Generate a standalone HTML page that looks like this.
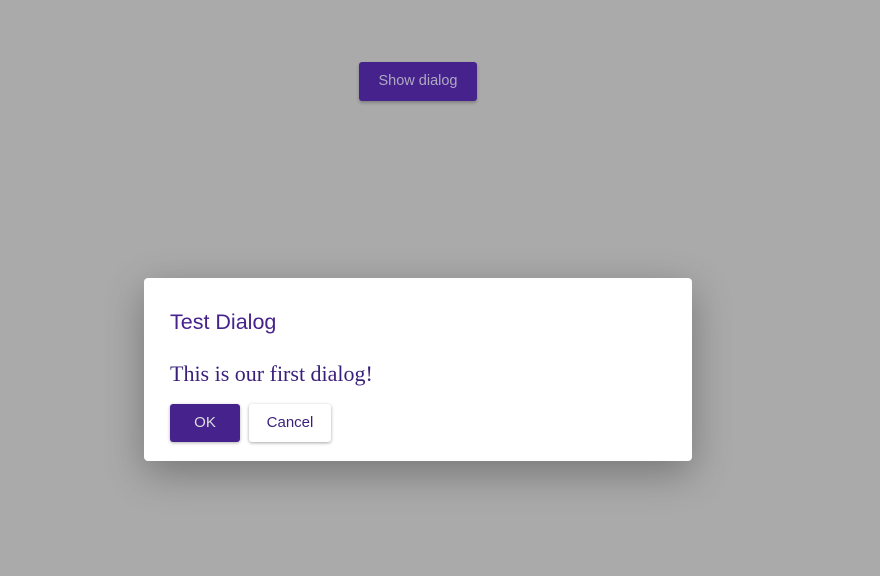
<!DOCTYPE html>
<html><head><style>
body{margin:0;width:880px;height:576px;background:#aaaaaa;position:relative;overflow:hidden;font-family:"Liberation Sans",sans-serif}
.show{position:absolute;left:359px;top:62px;width:118px;height:39px;background:#45228c;border-radius:3px;color:#b0a8c0;font-size:14.5px;line-height:39px;text-align:center;box-shadow:0 2px 3px rgba(0,0,0,.25)}
.dlg{position:absolute;left:144px;top:278px;width:548px;height:183px;background:#fff;border-radius:4px;box-shadow:0 12px 40px rgba(0,0,0,.3)}
.t{position:absolute;left:26px;top:32px;font-size:21.5px;color:#45228c}
.b{position:absolute;left:26px;top:83px;font-family:"Liberation Serif",serif;font-size:22px;color:#3a1f7a}
.ok{position:absolute;left:26px;top:126px;width:70px;height:38px;background:#45228c;border-radius:3px;color:#ddd;font-size:15px;line-height:38px;text-align:center;box-shadow:0 1px 3px rgba(0,0,0,.3)}
.cn{position:absolute;left:105px;top:126px;width:82px;height:38px;background:#fff;border-radius:3px;color:#3a1f7a;font-size:15px;line-height:38px;text-align:center;box-shadow:0 1px 3px rgba(0,0,0,.35)}
</style></head><body>
<div class="show">Show dialog</div>
<div class="dlg"><div class="t">Test Dialog</div><div class="b">This is our first dialog!</div><div class="ok">OK</div><div class="cn">Cancel</div></div>
</body></html>
